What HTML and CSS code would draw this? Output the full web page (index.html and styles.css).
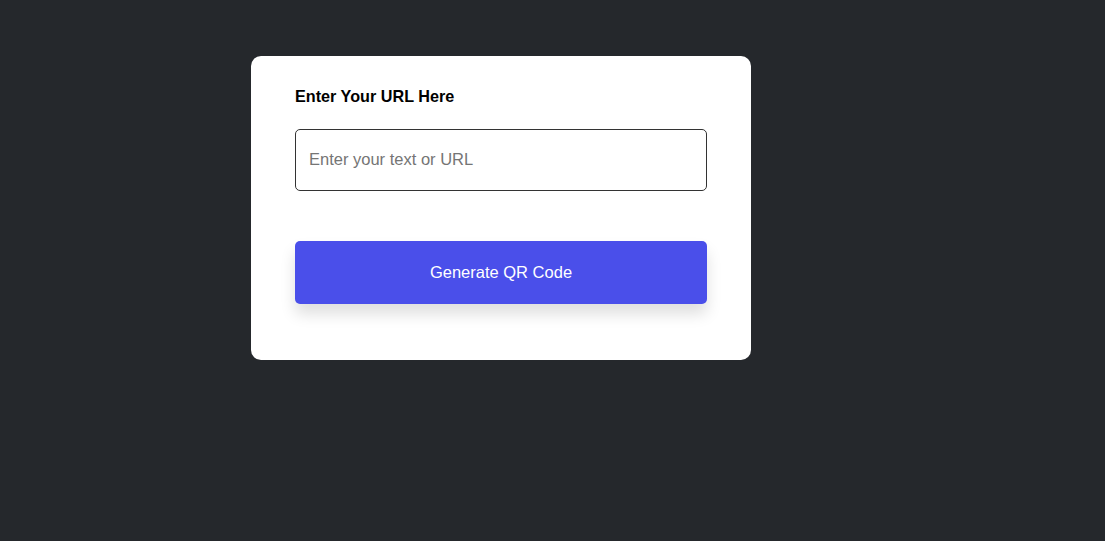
FILE: index.html
```html
<!DOCTYPE html>
<html lang="en">
<head>
<meta charset="utf-8">
<title>QR Code Generator</title>
<link rel="stylesheet" href="styles.css">
</head>
<body>
<main class="page">
  <section class="card">
    <label class="label" for="url">Enter Your URL Here</label>
    <input class="input" id="url" type="text" placeholder="Enter your text or URL">
    <button class="btn" type="button">Generate QR Code</button>
  </section>
</main>
</body>
</html>
```
FILE: styles.css
```css
* { box-sizing: border-box; }
html, body { margin: 0; padding: 0; }
body {
  background: #25282c;
  font-family: "Liberation Sans", Arial, sans-serif;
  min-height: 541px;
}
.page {
  padding: 56px 0 0 251px;
}
.card {
  width: 500px;
  background: #ffffff;
  border-radius: 10px;
  padding: 31px 44px 56px;
  display: flex;
  flex-direction: column;
}
.label {
  font-weight: bold;
  font-size: 16.2px;
  line-height: 18px;
  color: #000;
}
.input {
  margin-top: 24px;
  height: 62px;
  width: 100%;
  border: 1px solid #333;
  border-radius: 5px;
  padding: 0 13px 2px;
  font-family: inherit;
  font-size: 16.5px;
  color: #222;
  outline: none;
}
.input::placeholder { color: #757575; }
.btn {
  margin-top: 50px;
  height: 63px;
  width: 100%;
  border: none;
  border-radius: 5px;
  background: #4a4fea;
  color: #fff;
  font-family: inherit;
  font-size: 16.5px;
  box-shadow: 0 10px 15px rgba(0, 0, 0, 0.13);
  cursor: pointer;
}
```
